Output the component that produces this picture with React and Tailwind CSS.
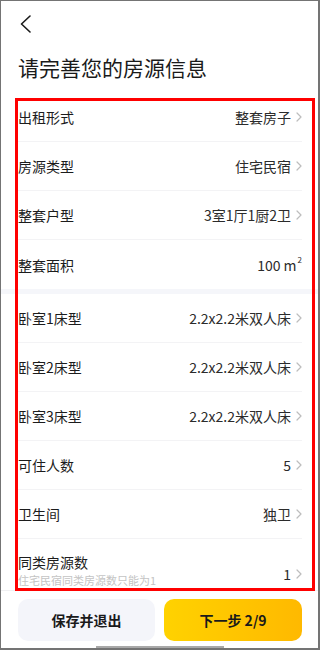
import React from 'react';

const Chevron = () => (
  <svg width="6" height="10" viewBox="0 0 6 10" className="shrink-0">
    <polyline points="1,1 5,5 1,9" fill="none" stroke="#bdbdbd" strokeWidth="1.2" strokeLinecap="round" strokeLinejoin="round" />
  </svg>
);

const Row = ({ label, value, arrow = true, last = false }) => (
  <div className={`ml-[17px] mr-[16px] h-[49px] flex items-center justify-between ${last ? '' : 'border-b border-[#f3f3f5]'}`}>
    <span className="text-[14px] leading-[20px] text-[#1c1c1c]">{label}</span>
    <div className="flex items-center gap-[5px]">
      <span className="text-[14px] leading-[20px] text-[#2b2b2b]">{value}</span>
      {arrow && <Chevron />}
    </div>
  </div>
);

export default function App() {
  const groupA = [
    { label: '出租形式', value: '整套房子' },
    { label: '房源类型', value: '住宅民宿' },
    { label: '整套户型', value: '3室1厅1厨2卫' },
    {
      label: '整套面积',
      value: (
        <span className="flex items-start">
          100 m<span className="text-[8px] leading-[10px] ml-[1px]">2</span>
        </span>
      ),
      arrow: false,
    },
  ];

  const groupB = [
    { label: '卧室1床型', value: '2.2x2.2米双人床' },
    { label: '卧室2床型', value: '2.2x2.2米双人床' },
    { label: '卧室3床型', value: '2.2x2.2米双人床' },
    { label: '可住人数', value: '5' },
    { label: '卫生间', value: '独卫' },
  ];

  return (
    <div className="relative w-[320px] h-[650px] bg-white overflow-hidden flex flex-col border-l border-t border-r-2 border-b-2 border-[#747474] font-['Noto_Sans_CJK_SC',sans-serif]">
      {/* header */}
      <div className="h-[45px] pl-[19px] pt-[14px]">
        <svg width="11" height="18" viewBox="0 0 11 18">
          <polyline points="10,1 1.5,9 10,17" fill="none" stroke="#1a1a1a" strokeWidth="1.6" strokeLinecap="round" strokeLinejoin="round" />
        </svg>
      </div>

      <h1 className="pl-[17px] pt-[6px] mb-[11px] text-[21px] leading-[30px] font-normal text-[#1a1a1a]">
        请完善您的房源信息
      </h1>

      <div>
        {groupA.map((r, i) => (
          <Row key={r.label} {...r} last={i === groupA.length - 1} />
        ))}
      </div>

      <div className="h-[5px] bg-[#f5f6fa]" />

      <div>
        {groupB.map((r) => (
          <Row key={r.label} {...r} />
        ))}
        <div className="ml-[17px] mr-[16px] h-[51px] flex justify-between pt-[13px]">
          <div className="flex flex-col">
            <span className="text-[14px] leading-[20px] text-[#1c1c1c]">同类房源数</span>
            <span className="text-[11px] leading-[16px] text-[#c4c4c4]">住宅民宿同类房源数只能为1</span>
          </div>
          <div className="flex items-center gap-[5px] pt-[12px] self-start">
            <span className="text-[14px] leading-[20px] text-[#2b2b2b]">1</span>
            <Chevron />
          </div>
        </div>
      </div>

      {/* bottom bar */}
      <div className="border-t border-[#f0f0f2] pt-[8px] pl-[17px] pr-[16px] flex gap-[9px]">
        <button className="w-[137px] h-[42px] rounded-[10px] bg-[#f4f5fa] text-[14px] font-bold text-[#1a1a1a]">
          保存并退出
        </button>
        <button className="flex-1 h-[42px] rounded-[10px] bg-gradient-to-r from-[#ffd200] to-[#ffb900] text-[14px] font-bold text-[#1a1a1a]">
          下一步 2/9
        </button>
      </div>

      {/* home indicator */}
      <div className="absolute bottom-0 left-[95px] w-[128px] h-[2px] bg-[#a9a9a9]" />

      {/* annotation frame */}
      <div className="absolute left-[14px] top-[97px] w-[300px] h-[493px] border-[3px] border-[#ff0000] pointer-events-none" />
    </div>
  );
}
